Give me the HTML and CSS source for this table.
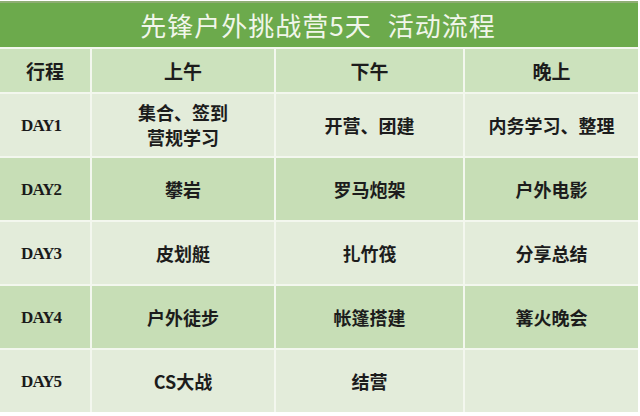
FILE: index.html
```html
<!DOCTYPE html>
<html lang="zh">
<head>
<meta charset="utf-8">
<title>先锋户外挑战营5天 活动流程</title>
<link rel="stylesheet" href="styles.css">
</head>
<body>
<div class="sheet">
  <div class="title">先锋户外挑战营5天<span class="gap"></span>活动流程</div>
  <div class="cell head">行程</div>
  <div class="cell head">上午</div>
  <div class="cell head">下午</div>
  <div class="cell head">晚上</div>

  <div class="cell odd day">DAY1</div>
  <div class="cell odd">集合、签到<br>营规学习</div>
  <div class="cell odd">开营、团建</div>
  <div class="cell odd">内务学习、整理</div>

  <div class="cell even day">DAY2</div>
  <div class="cell even">攀岩</div>
  <div class="cell even">罗马炮架</div>
  <div class="cell even">户外电影</div>

  <div class="cell odd day">DAY3</div>
  <div class="cell odd">皮划艇</div>
  <div class="cell odd">扎竹筏</div>
  <div class="cell odd">分享总结</div>

  <div class="cell even day">DAY4</div>
  <div class="cell even">户外徒步</div>
  <div class="cell even">帐篷搭建</div>
  <div class="cell even">篝火晚会</div>

  <div class="cell odd day">DAY5</div>
  <div class="cell odd">CS大战</div>
  <div class="cell odd">结营</div>
  <div class="cell odd"></div>
</div>
</body>
</html>
```

FILE: styles.css
```css
html, body {
  margin: 0;
  padding: 0;
  background: #ffffff;
}

.sheet {
  width: 638px;
  margin-top: 1px;
  display: grid;
  grid-template-columns: 90px 182px 187px 173px;
  grid-template-rows: 46px 43px 62px 62px 62px 62px 62px;
  gap: 2px;
  background: #f3f7ee;
  font-family: "Noto Sans CJK SC", "Noto Sans", sans-serif;
}

.title {
  grid-column: 1 / -1;
  display: flex;
  align-items: center;
  justify-content: center;
  background: #6caa4c;
  border-top: 2px solid #8fae74;
  box-sizing: border-box;
  color: #f1f6ea;
  font-size: 26px;
  letter-spacing: 1px;
  padding-right: 2px;
  padding-bottom: 2px;
}

.gap {
  display: inline-block;
  width: 16px;
}

.cell {
  display: flex;
  align-items: center;
  justify-content: center;
  text-align: center;
  font-size: 18px;
  font-weight: 700;
  line-height: 25px;
  color: #1c1c1c;
}

.head {
  background: #cce2bd;
  font-size: 19px;
}

.odd {
  background: #e3ecda;
}

.even {
  background: #c7deb6;
}

.cell.day {
  font-family: "Liberation Serif", serif;
  font-size: 17px;
  letter-spacing: -0.9px;
  font-weight: 700;
  justify-content: flex-start;
  padding-left: 21px;
  color: #1a1a1a;
}
```
